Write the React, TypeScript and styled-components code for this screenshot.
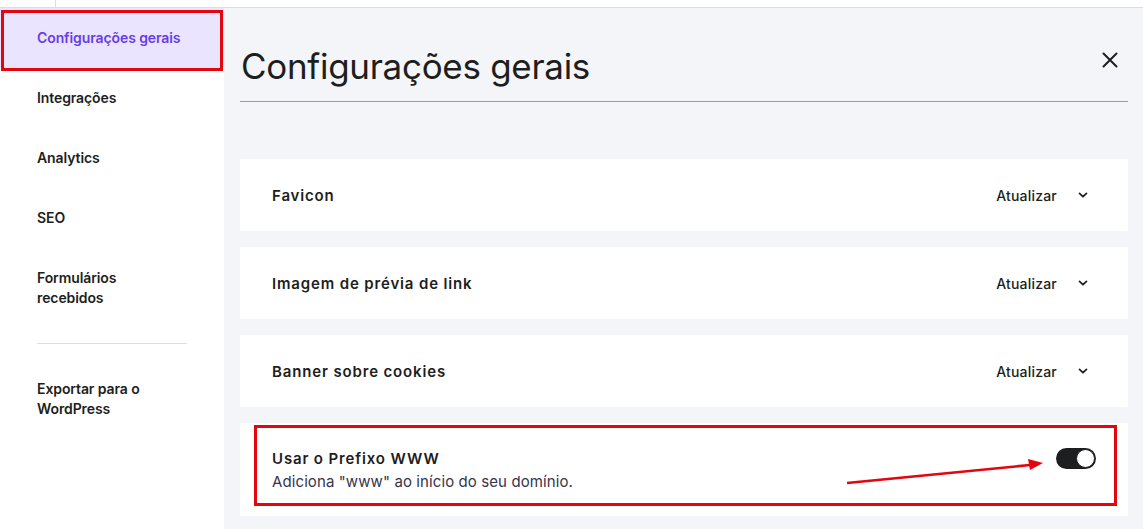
import React from "react";
import styled, { createGlobalStyle } from "styled-components";

const Global = createGlobalStyle`
  html, body { margin: 0; padding: 0; background: #ffffff; }
  body { font-family: "Inter", "Liberation Sans", sans-serif; color: #1d1e20; }
  * { box-sizing: border-box; }
`;

const Page = styled.div`
  width: 1143px;
  height: 529px;
  display: flex;
  flex-direction: column;
  overflow: hidden;
`;

const TopBar = styled.div`
  height: 8px;
  flex: none;
  border-bottom: 1px solid #dcdde3;
  display: flex;
`;

const TopTab = styled.div`
  width: 56px;
  border-right: 1px solid #dcdde3;
`;

const Body = styled.div`
  flex: 1;
  display: flex;
  min-height: 0;
`;

const Sidebar = styled.nav`
  width: 224px;
  flex: none;
  background: #ffffff;
  display: flex;
  flex-direction: column;
`;

const NavItem = styled.div<{ $active?: boolean }>`
  position: relative;
  padding: 20px 37px;
  font-size: 14px;
  line-height: 20px;
  font-weight: 600;
  letter-spacing: -0.1px;
  color: ${(p) => (p.$active ? "#673de6" : "#1d1e20")};
  background: ${(p) => (p.$active ? "#ebe4ff" : "transparent")};
`;

const Divider = styled.hr`
  margin: 15px 37px 15px;
  border: none;
  border-top: 1px solid #dcdde3;
  width: 150px;
`;

const Annotation = styled.div<{ $t: number; $r: number; $b: number; $l: number }>`
  position: absolute;
  top: ${(p) => p.$t}px;
  right: ${(p) => p.$r}px;
  bottom: ${(p) => p.$b}px;
  left: ${(p) => p.$l}px;
  border: 3px solid #e3060f;
  pointer-events: none;
`;

const Main = styled.main`
  flex: 1;
  background: #f4f5f9;
  padding: 0 15px 0 16px;
  display: flex;
  flex-direction: column;
`;

const Header = styled.div`
  height: 94px;
  border-bottom: 1px solid #9a9ba0;
  display: flex;
  align-items: flex-start;
  justify-content: space-between;
  padding: 36px 10px 0 1px;
`;

const Title = styled.h1`
  margin: 0;
  font-size: 35px;
  line-height: 44px;
  font-weight: 400;
  letter-spacing: -0.3px;
  color: #1d1e20;
`;

const CloseButton = styled.button`
  border: none;
  background: transparent;
  padding: 0;
  width: 16px;
  height: 16px;
  margin-top: 8px;
  display: flex;
  color: #1d1e20;
`;

const Cards = styled.div`
  margin-top: 57px;
  display: flex;
  flex-direction: column;
  gap: 16px;
`;

const Card = styled.div<{ $tall?: boolean }>`
  position: relative;
  flex: none;
  background: #ffffff;
  height: ${(p) => (p.$tall ? 93 : 72)}px;
  padding: 0 32px;
  display: flex;
  align-items: center;
  justify-content: space-between;
`;

const CardText = styled.div`
  display: flex;
  flex-direction: column;
  padding-top: 1px;
`;

const CardTitle = styled.div`
  font-size: 15px;
  line-height: 23px;
  font-weight: 600;
  letter-spacing: 0.85px;
  color: #1d1e20;
`;

const CardSub = styled.div`
  font-size: 15px;
  line-height: 23px;
  font-weight: 400;
  letter-spacing: 0.1px;
  color: #36344d;
`;

const Action = styled.div`
  display: flex;
  align-items: center;
  gap: 20px;
  font-size: 14px;
  font-weight: 500;
  letter-spacing: 0.2px;
  color: #1d1e20;
  padding-right: 7px;
`;

const Toggle = styled.div`
  align-self: flex-start;
  margin-top: 25px;
  width: 40px;
  height: 21px;
  border-radius: 11px;
  background: #1d1e20;
  display: flex;
  align-items: center;
  justify-content: flex-end;
  padding: 1px;
`;

const Knob = styled.div`
  width: 19px;
  height: 19px;
  border-radius: 50%;
  background: #ffffff;
  border: 1px solid #1d1e20;
`;

const ArrowSvg = styled.svg`
  position: absolute;
  left: 600px;
  top: 30px;
  overflow: visible;
  pointer-events: none;
`;

const Chevron = () => (
  <svg width="12" height="12" viewBox="0 0 12 12" fill="none">
    <path d="M2.5 4.3L6 7.7L9.5 4.3" stroke="#1d1e20" strokeWidth="1.7" strokeLinecap="round" strokeLinejoin="round" />
  </svg>
);

const sections = ["Favicon", "Imagem de prévia de link", "Banner sobre cookies"];

export default function App() {
  return (
    <Page>
      <Global />
      <TopBar>
        <TopTab />
      </TopBar>
      <Body>
        <Sidebar>
          <NavItem $active>
            Configurações gerais
            <Annotation $t={2} $r={1} $b={-3} $l={1} />
          </NavItem>
          <NavItem>Integrações</NavItem>
          <NavItem>Analytics</NavItem>
          <NavItem>SEO</NavItem>
          <NavItem>
            Formulários
            <br />
            recebidos
          </NavItem>
          <Divider />
          <NavItem>
            Exportar para o
            <br />
            WordPress
          </NavItem>
        </Sidebar>
        <Main>
          <Header>
            <Title>Configurações gerais</Title>
            <CloseButton aria-label="Fechar">
              <svg width="16" height="16" viewBox="0 0 16 16" fill="none">
                <path d="M1.5 1.5L14.5 14.5M14.5 1.5L1.5 14.5" stroke="#1d1e20" strokeWidth="2" strokeLinecap="round" />
              </svg>
            </CloseButton>
          </Header>
          <Cards>
            {sections.map((s) => (
              <Card key={s}>
                <CardTitle>{s}</CardTitle>
                <Action>
                  Atualizar
                  <Chevron />
                </Action>
              </Card>
            ))}
            <Card $tall>
              <CardText>
                <CardTitle>Usar o Prefixo WWW</CardTitle>
                <CardSub>Adiciona "www" ao início do seu domínio.</CardSub>
              </CardText>
              <Toggle>
                <Knob />
              </Toggle>
              <Annotation $t={2} $r={11} $b={10} $l={14} />
              <ArrowSvg width="210" height="40" viewBox="0 0 210 40">
                <line x1="7" y1="30" x2="190" y2="12" stroke="#e3060f" strokeWidth="2.5" />
                <polygon points="203,10 188,6 190,17" fill="#e3060f" />
              </ArrowSvg>
            </Card>
          </Cards>
        </Main>
      </Body>
    </Page>
  );
}
